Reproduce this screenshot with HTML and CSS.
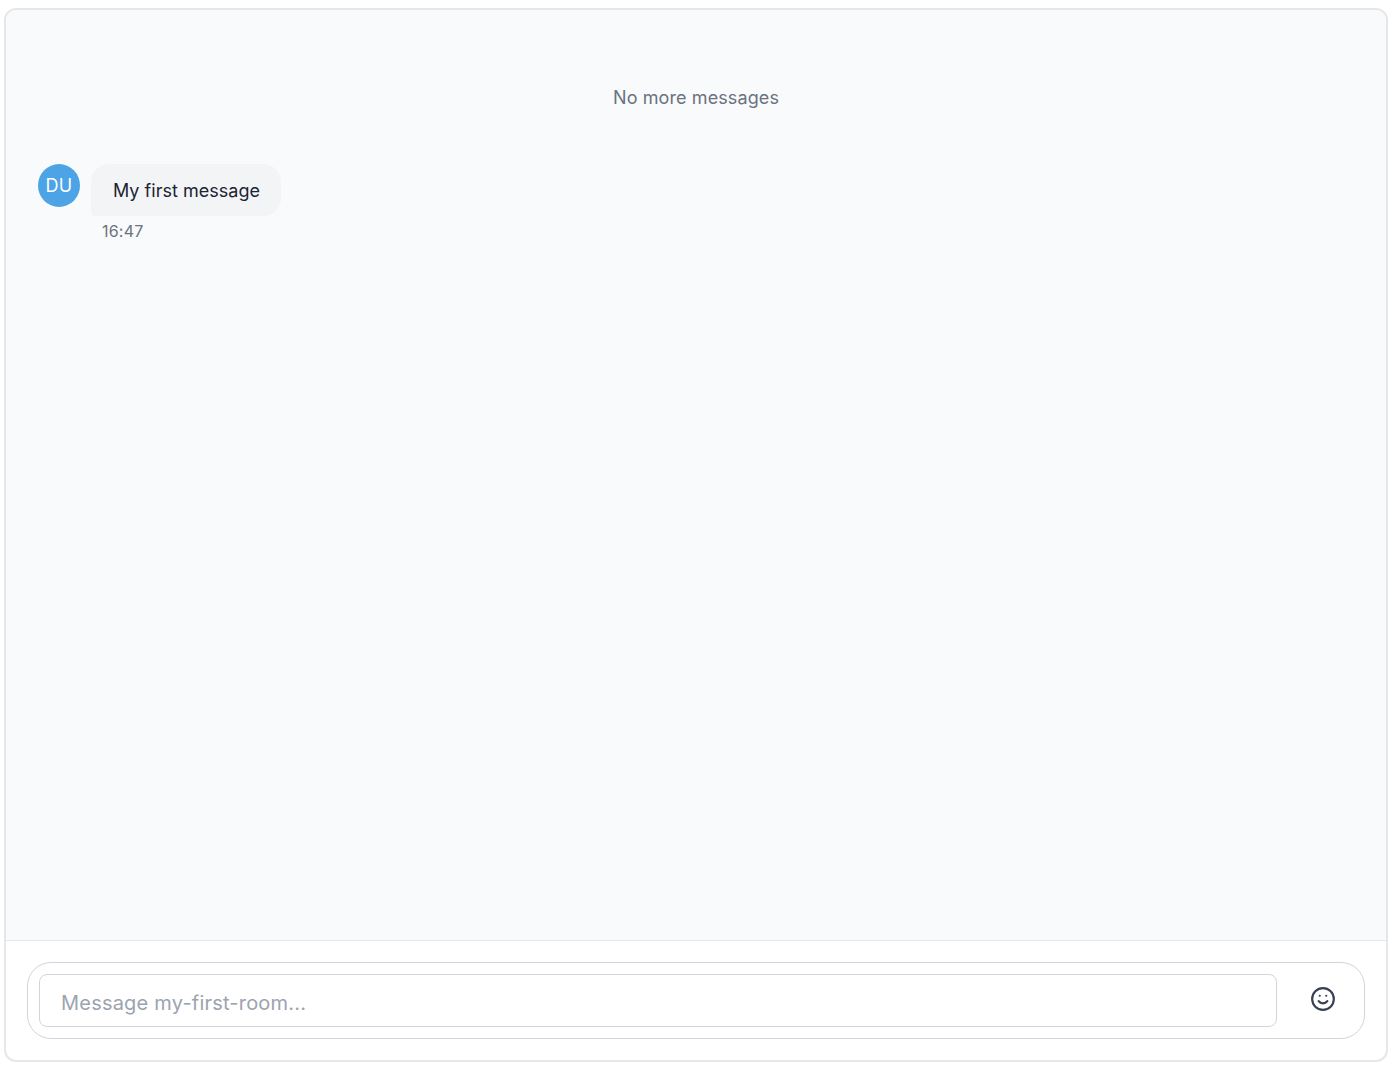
FILE: index.html
```html
<!DOCTYPE html>
<html lang="en">
<head>
<meta charset="utf-8">
<title>Chat</title>
<link rel="stylesheet" href="styles.css">
</head>
<body>
<main class="chat">
  <section class="messages">
    <p class="end-note">No more messages</p>
    <article class="message">
      <div class="avatar">DU</div>
      <div class="message-body">
        <div class="bubble">My first message</div>
        <time class="timestamp">16:47</time>
      </div>
    </article>
  </section>
  <footer class="composer">
    <form class="composer-box">
      <input class="composer-input" type="text" placeholder="Message my-first-room...">
      <button class="emoji-button" type="button" aria-label="Add emoji">
        <svg class="emoji-icon" viewBox="0 0 24 24" fill="none" stroke="currentColor" stroke-width="2" stroke-linecap="round" stroke-linejoin="round">
          <circle cx="12" cy="12" r="10"></circle>
          <path d="M8 14s1.5 2 4 2 4-2 4-2"></path>
          <line x1="9" y1="9" x2="9.01" y2="9"></line>
          <line x1="15" y1="9" x2="15.01" y2="9"></line>
        </svg>
      </button>
    </form>
  </footer>
</main>
</body>
</html>
```
FILE: styles.css
```css
* { box-sizing: border-box; }
html, body { height: 100%; }
body {
  margin: 0;
  padding: 8px 6px 8px 4px;
  background: #fff;
  font-family: Inter, "Liberation Sans", sans-serif;
}
.chat {
  height: 1054px;
  display: flex;
  flex-direction: column;
  border: 2px solid #e5e7eb;
  border-radius: 12px;
  overflow: hidden;
  background: #fff;
}
.messages {
  flex: 1;
  min-height: 0;
  background: #f9fafb;
  padding: 0 32px;
}
.end-note {
  margin: 0;
  padding-top: 74px;
  text-align: center;
  font-size: 18px;
  line-height: 28px;
  letter-spacing: 0.1px;
  color: #6b7280;
}
.message {
  display: flex;
  gap: 11px;
  margin-top: 52px;
}
.avatar {
  width: 42px;
  height: 43px;
  border-radius: 50%;
  background: #4ca3e6;
  color: #fff;
  font-size: 18px;
  letter-spacing: 0.3px;
  display: flex;
  align-items: center;
  justify-content: center;
}
.message-body { display: flex; flex-direction: column; align-items: flex-start; }
.bubble {
  width: 190px;
  padding: 13px 0 0 22px;
  height: 52px;
  border-radius: 18px 18px 18px 4px;
  background: #f3f4f6;
  color: #1b2433;
  font-size: 18px;
  line-height: 28px;
  letter-spacing: 0.02px;
  white-space: nowrap;
}
.timestamp {
  margin: 5px 0 0 11px;
  font-size: 16px;
  line-height: 20px;
  letter-spacing: 0.2px;
  color: #6b7280;
}
.composer {
  flex: none;
  height: 120px;
  border-top: 1px solid #e5e7eb;
  padding: 21px 21px 0;
}
.composer-box {
  height: 77px;
  display: flex;
  align-items: center;
  padding: 0 11px;
  border: 1px solid #d1d5db;
  border-radius: 24px;
}
.composer-input {
  width: 1238px;
  height: 53px;
  padding: 4px 21px 0;
  border: 1px solid #d1d5db;
  border-radius: 8px;
  background: #fff;
  outline: none;
  font: 20px Inter, "Liberation Sans", sans-serif;
  letter-spacing: 0.21px;
  color: #111827;
}
.composer-input::placeholder { color: #9ca3af; opacity: 1; }
.emoji-button {
  margin: -3px 0 0 33px;
  padding: 0;
  width: 26px;
  height: 26px;
  border: 0;
  background: none;
  color: #374151;
}
.emoji-icon { display: block; width: 26px; height: 26px; }
```
